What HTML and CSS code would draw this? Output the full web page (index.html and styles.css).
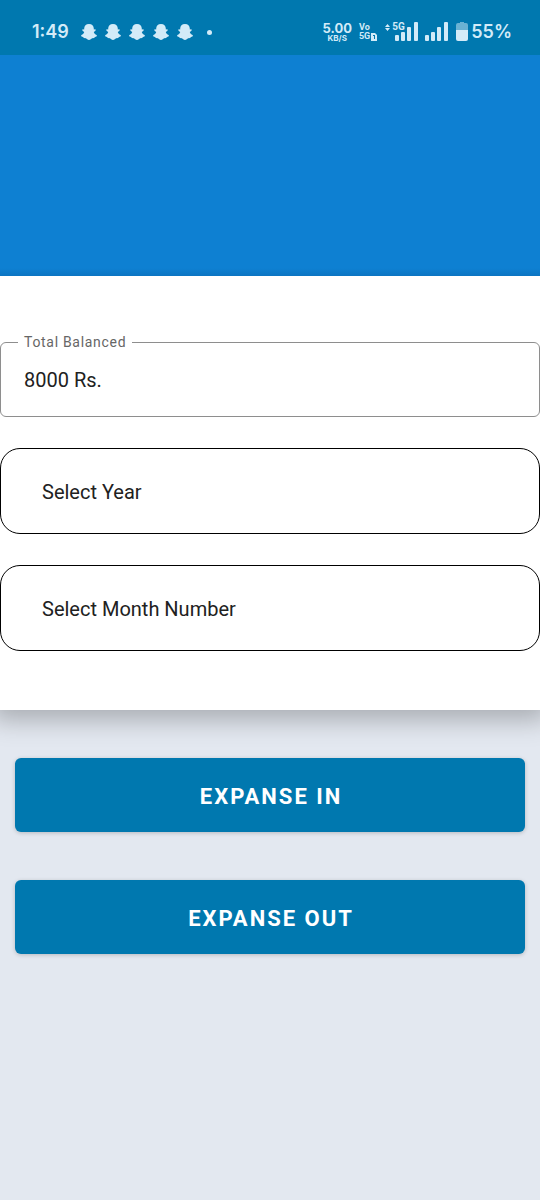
FILE: index.html
```html
<!DOCTYPE html>
<html lang="en">
<head>
<meta charset="utf-8">
<meta name="viewport" content="width=device-width, initial-scale=1">
<title>Expanse</title>
<link rel="stylesheet" href="styles.css">
</head>
<body>
<svg width="0" height="0" class="sprite" aria-hidden="true">
  <symbol id="ghost" viewBox="0 0 16 16">
    <path d="M8 0C5 0 3.200 1.800 3.200 4.500V5.400L1.800 5.300C1.100 5.600 1.200 6.500 1.800 6.900L3.200 7.900C2.900 9.300 1.900 10.400 .4 11.100C-.1 11.500.1 12.400 1 12.700L2.200 13L2.700 14L4.900 14.200C5.800 14.800 6.600 15.900 8 15.900S10.200 14.800 11.100 14.200L13.300 14L13.800 13L15 12.700C15.900 12.400 16.100 11.500 15.600 11.100C14.100 10.400 13.100 9.300 12.800 7.900L14.200 6.900C14.800 6.500 14.900 5.600 14.200 5.300L12.800 5.400V4.500C12.800 1.800 11 0 8 0Z"/>
  </symbol>
  <symbol id="bars" viewBox="0 0 24 20">
    <rect x="0" y="13" width="4" height="6" rx="1"/>
    <rect x="6" y="10" width="4" height="9" rx="1"/>
    <rect x="12" y="5" width="4" height="14" rx="1"/>
    <rect x="19" y="0" width="4" height="19" rx="1"/>
  </symbol>
</svg>
<header class="status">
  <span class="clock">1:49</span>
  <div class="notices">
    <svg class="ghost"><use href="#ghost"/></svg>
    <svg class="ghost"><use href="#ghost"/></svg>
    <svg class="ghost"><use href="#ghost"/></svg>
    <svg class="ghost"><use href="#ghost"/></svg>
    <svg class="ghost"><use href="#ghost"/></svg>
    <span class="dot"></span>
  </div>
  <div class="speed"><span class="rate">5.00</span><span class="unit">KB/S</span></div>
  <div class="volte">
    <span>Vo</span>
    <span class="volte-row">5G
      <svg class="sim" viewBox="0 0 6 8"><path fill-rule="evenodd" d="M0 0H4L6 2V8H0ZM2 2V3H3V6H4V2Z"/></svg>
    </span>
  </div>
  <div class="network">
    <svg class="bars"><use href="#bars"/></svg>
    <span class="network-type">
      <svg class="arrows" viewBox="0 0 5 7"><path d="M0 3L2.500 0L5 3ZM0 4H5L2.500 7Z"/></svg>5G
    </span>
  </div>
  <svg class="bars"><use href="#bars"/></svg>
  <svg class="battery" viewBox="0 0 12 20">
    <path opacity=".5" d="M4 0H8V1H10Q12 1 12 3V8H0V3Q0 1 2 1H4Z"/>
    <path d="M0 8H12V17Q12 19 10 19H2Q0 19 0 17Z"/>
  </svg>
  <span class="percent">55%</span>
</header>
<div class="banner"></div>
<main>
  <form class="card">
    <fieldset class="outlined">
      <legend><label for="total">Total Balanced</label></legend>
      <input id="total" type="text" value="8000 Rs.">
    </fieldset>
    <select class="picker" aria-label="Select Year"><option>Select Year</option></select>
    <select class="picker" aria-label="Select Month Number"><option>Select Month Number</option></select>
  </form>
  <div class="actions">
    <button type="button" class="action">EXPANSE IN</button>
    <button type="button" class="action">EXPANSE OUT</button>
  </div>
</main>
</body>
</html>
```
FILE: styles.css
```css
* {
  box-sizing: border-box;
}

body {
  margin: 0;
  min-height: 100vh;
  background: #e3e8f0;
  color: #212121;
  font-family: Roboto, "Liberation Sans", sans-serif;
}

.sprite {
  position: absolute;
}

.status {
  display: flex;
  align-items: center;
  padding: 9px 28px 0 32px;
  height: 55px;
  background: #0078af;
  color: #d3ebf8;
  font-family: Inter, Roboto, sans-serif;
  font-weight: 600;
}

.status svg {
  fill: currentColor;
  flex: none;
}

.clock,
.percent {
  font-size: 18px;
  line-height: 20px;
}

.notices {
  display: flex;
  align-items: center;
  gap: 8px;
  margin-left: 12px;
  margin-right: auto;
}

.ghost {
  width: 16px;
  height: 16px;
}

.dot {
  width: 5px;
  height: 5px;
  margin-left: 6px;
  border-radius: 50%;
  background: currentColor;
}

.speed {
  display: flex;
  flex-direction: column;
  align-items: center;
  margin-right: 7px;
  font-weight: 700;
}

.rate {
  font-size: 13px;
  line-height: 12px;
}

.unit {
  font-size: 8px;
  line-height: 8px;
}

.volte {
  display: flex;
  flex-direction: column;
  margin-right: 8px;
  font-family: Roboto, sans-serif;
  font-size: 9px;
  font-weight: 700;
  line-height: 9px;
}

.volte-row {
  display: flex;
  align-items: center;
  gap: 1px;
}

.sim {
  width: 6px;
  height: 8px;
}

.network {
  position: relative;
  padding-left: 10px;
  margin-right: 6px;
}

.network-type {
  position: absolute;
  top: -1px;
  left: 0;
  display: flex;
  align-items: center;
  gap: 2px;
  font-family: Roboto, sans-serif;
  font-size: 10px;
  font-weight: 700;
  line-height: 12px;
}

.arrows {
  width: 5px;
  height: 7px;
}

.bars {
  display: block;
  width: 24px;
  height: 20px;
}

.battery {
  width: 12px;
  height: 20px;
  margin-left: 7px;
  margin-right: 3px;
}

.banner {
  height: 221px;
  background: linear-gradient(#0e80d2 calc(100% - 8px), #0c74c2);
}

.card {
  display: flex;
  flex-direction: column;
  gap: 31px;
  padding: 58px 0 59px;
  background: #fff;
  box-shadow: 0 2px 24px 8px rgba(0, 0, 0, 0.26);
  clip-path: inset(0 0 -40px 0);
}

.outlined {
  min-width: 0;
  margin: 0;
  padding: 0 17px;
  border: 1px solid #8e8e8e;
  border-radius: 6px;
}

.outlined legend {
  padding: 0 6px;
  color: #666;
  font-size: 14px;
  line-height: 16px;
  letter-spacing: 0.05em;
}

.outlined input {
  display: block;
  width: 100%;
  height: 66px;
  padding: 0 6px 6px;
  border: 0;
  outline: 0;
  background: none;
  color: #212121;
  font: 20px Roboto, sans-serif;
}

.picker {
  appearance: none;
  width: 100%;
  height: 86px;
  padding: 2px 41px 0;
  border: 1px solid #000;
  border-radius: 20px;
  background: #fff;
  color: #212121;
  font: 20px Roboto, sans-serif;
}

.actions {
  display: flex;
  flex-direction: column;
  gap: 48px;
  padding: 48px 15px;
}

.action {
  position: relative;
  height: 74px;
  padding: 2px 0 0 2px;
  border: 0;
  border-radius: 6px;
  background: #0078af;
  box-shadow: 0 1px 4px rgba(0, 0, 0, 0.2);
  color: #fff;
  font: 700 22px Roboto, sans-serif;
  letter-spacing: 2px;
}
```
